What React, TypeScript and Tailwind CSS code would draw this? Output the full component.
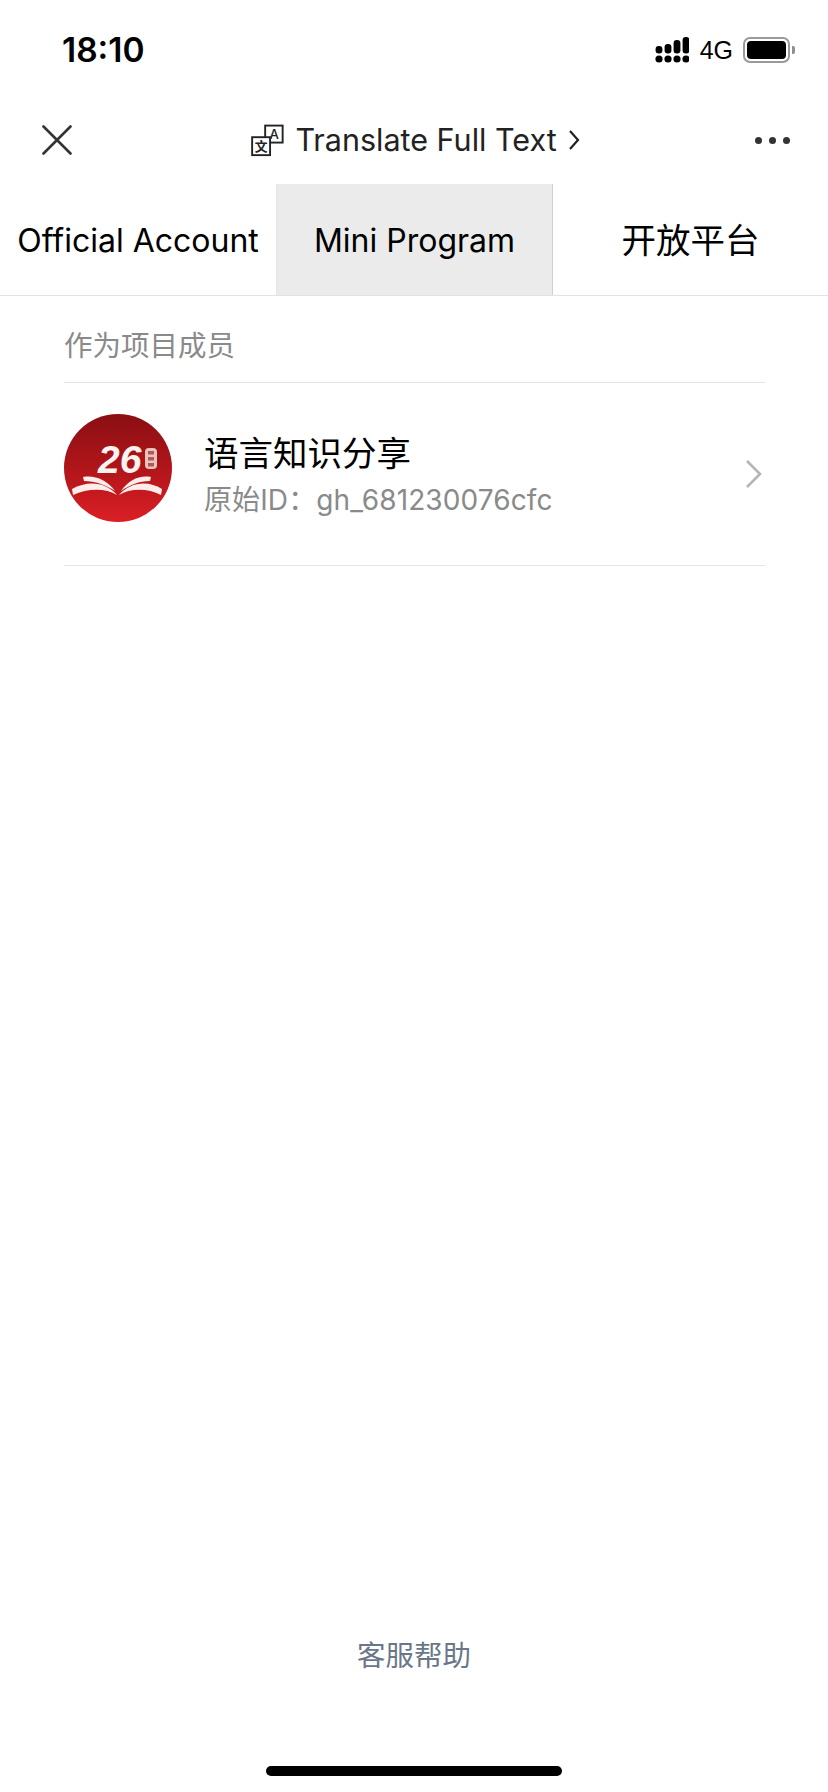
import React from 'react'

const CJK = "font-['Inter','Noto_Sans_CJK_SC',sans-serif]"

function SignalIcon() {
  return (
    <svg width="34" height="26" viewBox="0 0 34 26" className="block">
      <g fill="#000">
        <circle cx="4" cy="22" r="3.6" />
        <circle cx="13" cy="22" r="3.6" />
        <circle cx="22" cy="22" r="3.6" />
        <circle cx="31" cy="22" r="3.6" />
        <rect x="0.6" y="9" width="6.8" height="7.5" rx="3.2" />
        <rect x="9.6" y="7" width="6.8" height="9.5" rx="3.2" />
        <rect x="18.6" y="3" width="6.8" height="13.5" rx="3.2" />
        <rect x="27.6" y="0" width="6.8" height="16.5" rx="3.2" />
      </g>
    </svg>
  )
}

function BatteryIcon() {
  return (
    <div className="flex items-center gap-[2px]">
      <div className="w-[47px] h-[26px] rounded-[7px] border-2 border-[#9a9a9a] p-[2px]">
        <div className="w-full h-full rounded-[4px] bg-black" />
      </div>
      <div className="w-[3px] h-[8px] rounded-r-[2px] bg-[#8f8f8f]" />
    </div>
  )
}

function TranslateIcon() {
  return (
    <svg width="34" height="33" viewBox="0 0 36 34" className="block">
      <rect x="15" y="1.2" width="18.5" height="18" fill="#fff" stroke="#222" strokeWidth="2" />
      <text x="24.5" y="15.5" textAnchor="middle" fontSize="14" fontFamily="Inter, sans-serif" fontWeight="500" fill="#222">
        A
      </text>
      <rect x="1.2" y="13.5" width="19" height="19" fill="#fff" stroke="#222" strokeWidth="2" />
      <text x="10.7" y="28" textAnchor="middle" fontSize="13.5" fontFamily="'Noto Sans CJK SC', sans-serif" fontWeight="700" fill="#222">
        文
      </text>
    </svg>
  )
}

function Avatar() {
  return (
    <svg width="108" height="108" viewBox="0 0 108 108" className="block">
      <defs>
        <linearGradient id="red" x1="0" y1="0" x2="0" y2="1">
          <stop offset="0" stopColor="#8a0f13" />
          <stop offset="0.55" stopColor="#b4161b" />
          <stop offset="1" stopColor="#dc1f26" />
        </linearGradient>
      </defs>
      <circle cx="54" cy="54" r="54" fill="url(#red)" />
      <text x="34" y="59" fontFamily="'Liberation Sans', sans-serif" fontWeight="700" fontStyle="italic" fontSize="39" fill="#fbf3f0">
        26
      </text>
      <rect x="81" y="34" width="12" height="21" rx="4" fill="#e8c4bd" />
      <rect x="84" y="37" width="6" height="3.5" fill="#b05a58" />
      <rect x="84" y="43" width="6" height="3.5" fill="#b05a58" />
      <rect x="84" y="49" width="6" height="3.5" fill="#b05a58" />
      <path d="M8 75 C24 66 42 68 53 81 C42 74 24 74 9 81 Z" fill="#fbeeea" />
      <path d="M98 75 C84 66 66 68 55 81 C66 74 84 74 97 81 Z" fill="#fbeeea" />
      <path d="M19 63 C31 61 43 66 51 77 C42 71 31 67 20 67 Z" fill="#fbeeea" />
      <path d="M87 63 C75 61 65 66 57 77 C66 71 75 67 86 67 Z" fill="#fbeeea" />
    </svg>
  )
}

export default function App() {
  return (
    <div className={`${CJK} w-[828px] h-[1792px] bg-white flex flex-col text-black overflow-hidden`}>
      {/* status bar */}
      <div className="h-[98px] flex items-center justify-between pt-[2px] pl-[62px] pr-[33px] shrink-0">
        <span className="text-[33.5px] font-semibold">18:10</span>
        <div className="flex items-center">
          <SignalIcon />
          <span className="ml-[11px] mr-[10px] text-[25px] leading-none font-['Liberation_Sans',sans-serif]">4G</span>
          <BatteryIcon />
        </div>
      </div>

      {/* title bar */}
      <div className="h-[86px] flex items-center justify-between pb-[2px] pl-[42px] pr-[38px] shrink-0">
        <svg width="30" height="30" viewBox="0 0 30 30" className="block">
          <path d="M1.5 1.5 L28.5 28.5 M28.5 1.5 L1.5 28.5" stroke="#333" strokeWidth="2.6" strokeLinecap="round" />
        </svg>
        <div className="flex items-center ml-[4px]">
          <TranslateIcon />
          <span className="ml-[10px] text-[30.5px] text-[#222] font-normal">Translate Full Text</span>
          <svg width="12" height="22" viewBox="0 0 12 22" className="block ml-[11px]">
            <path d="M2 2 L10 11 L2 20" fill="none" stroke="#222" strokeWidth="2.2" />
          </svg>
        </div>
        <div className="flex gap-[7px]">
          <div className="w-[7px] h-[7px] rounded-full bg-[#333]" />
          <div className="w-[7px] h-[7px] rounded-full bg-[#333]" />
          <div className="w-[7px] h-[7px] rounded-full bg-[#333]" />
        </div>
      </div>

      {/* tabs */}
      <div className="h-[112px] grid grid-cols-[276px_277px_1fr] border-b border-[#e2e2e2] shrink-0 text-[32px]">
        <div className="flex items-center justify-center whitespace-nowrap pt-[2px]">Official Account</div>
        <div className="flex items-center justify-center whitespace-nowrap pt-[2px] bg-[#ebebeb] border-l border-[#e6e6e6] border-r border-r-[#d0d0d0]">Mini Program</div>
        <div className="flex items-center justify-center whitespace-nowrap pt-[2px] text-[34.5px]">开放平台</div>
      </div>

      {/* list */}
      <div className="ml-[64px] mr-[63px] flex-1">
        <div className="h-[87px] flex items-center pt-[14px] border-b border-[#e4e4e4] text-[28.5px] text-[#8a8a8a]">作为项目成员</div>
        <div className="h-[183px] flex items-center border-b border-[#e4e4e4]">
          <div className="self-start mt-[31px] shrink-0">
            <Avatar />
          </div>
          <div className="self-start mt-[48px] ml-[32px] flex-1 flex flex-col">
            <span className="text-[34.5px] leading-[46px]">语言知识分享</span>
            <span className="mt-[3px] text-[28px] leading-[40px] tracking-[0.1px] text-[#8a8a8a]">原始ID：gh_681230076cfc</span>
          </div>
          <svg width="18" height="30" viewBox="0 0 18 30" className="block mr-[2px]">
            <path d="M2 2 L15 15 L2 28" fill="none" stroke="#b5b5b5" strokeWidth="2.6" />
          </svg>
        </div>
      </div>

      {/* footer */}
      <div className="shrink-0 flex flex-col items-center pb-[16px]">
        <span className="text-[28.5px] leading-[40px] text-[#6b7789]">客服帮助</span>
        <div className="mt-[90px] w-[296px] h-[10px] rounded-full bg-black" />
      </div>
    </div>
  )
}
